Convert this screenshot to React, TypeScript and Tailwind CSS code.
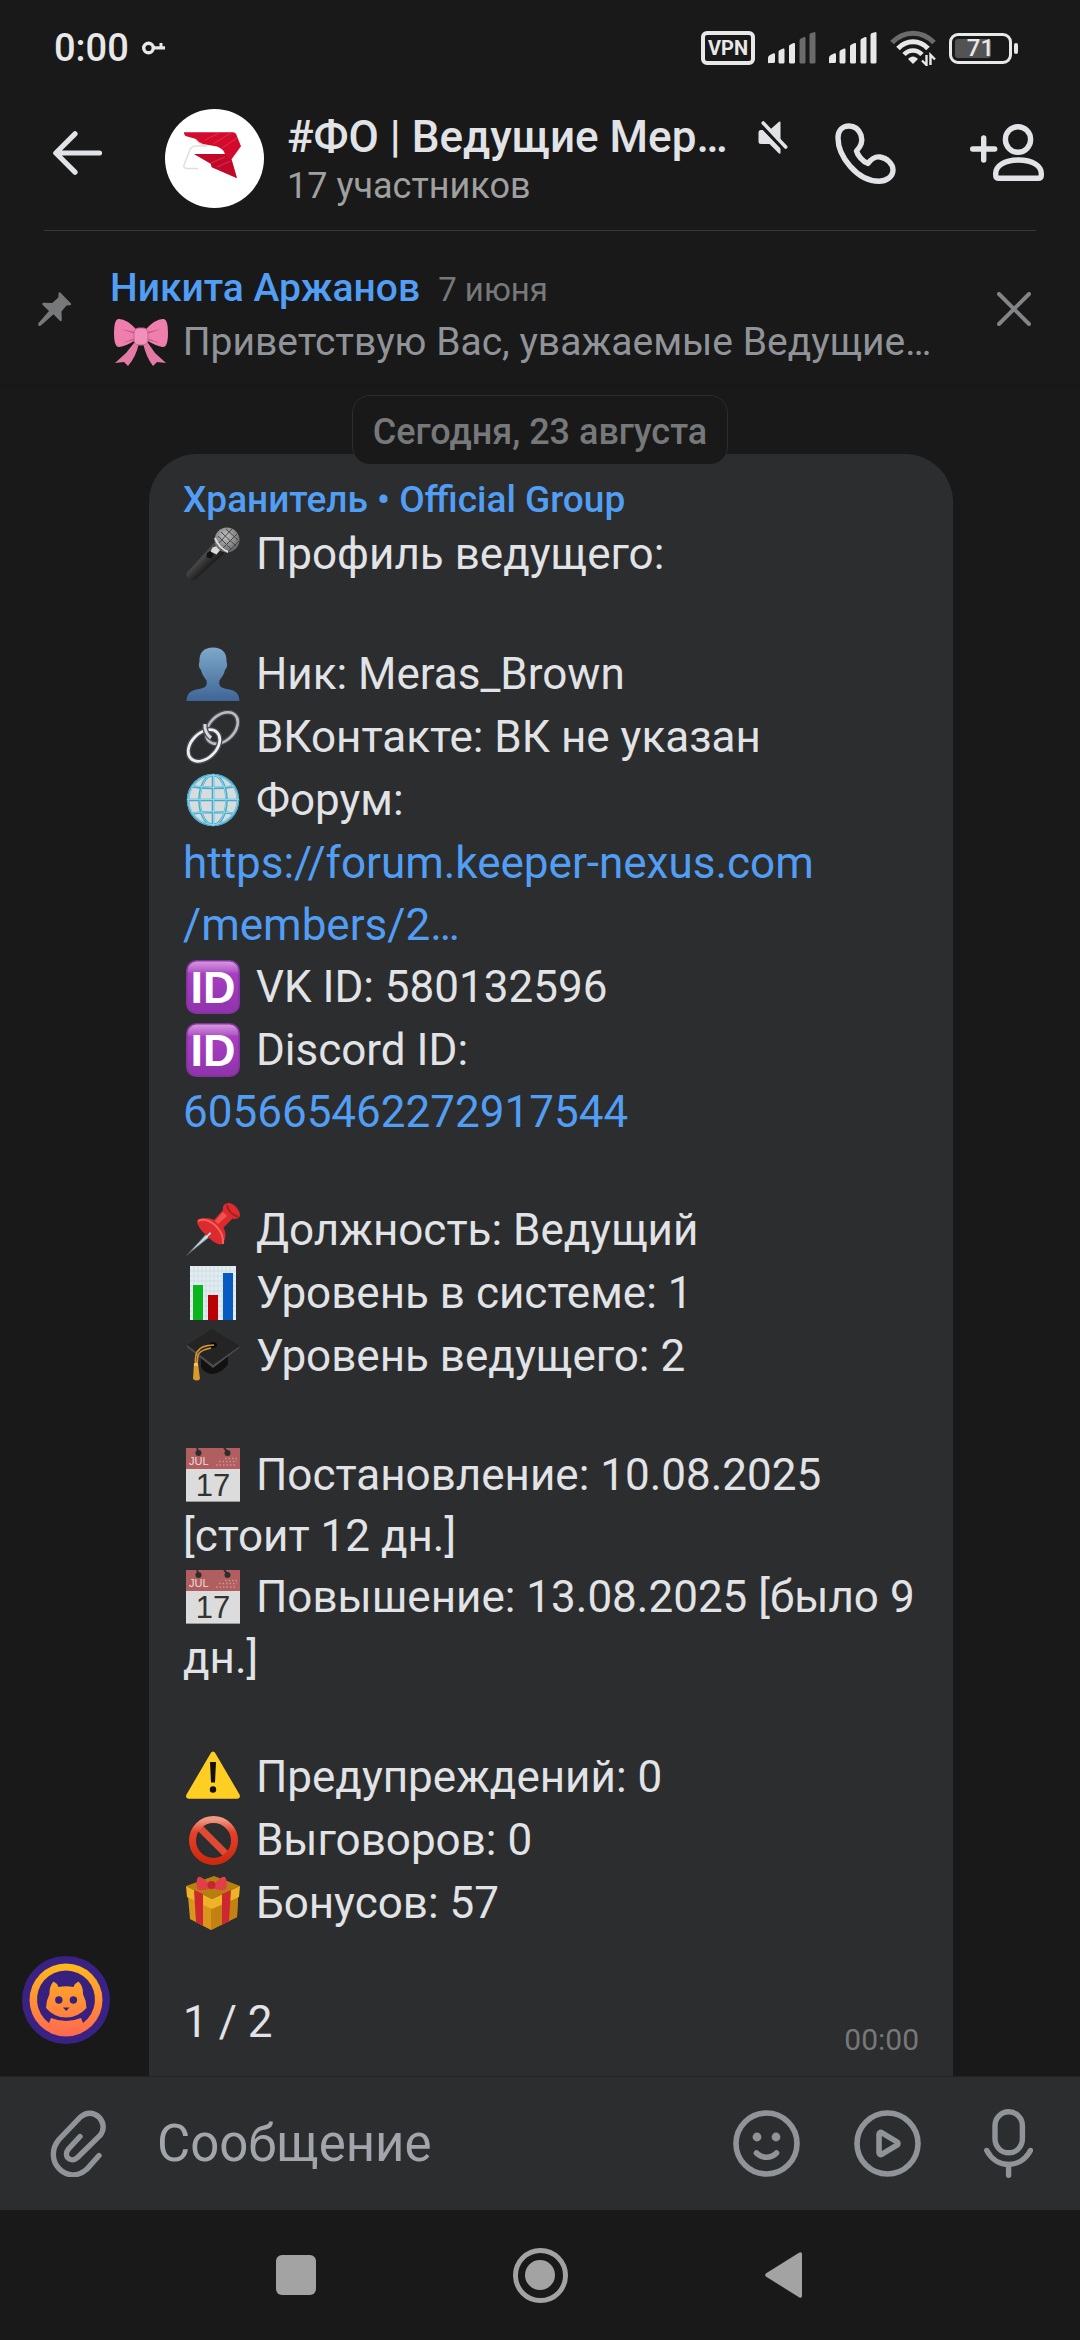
import React, { useState } from 'react';

interface IconProps {
  className?: string;
}

/* ---------- status bar ---------- */

const KeyIcon = () => (
  <svg width="23" height="14" viewBox="0 0 23 14" fill="none" aria-hidden="true">
    <circle cx="6.5" cy="7" r="4.8" stroke="#e8e8e8" strokeWidth="3.4" />
    <path d="M11 5.2h12v3.4H11zM17.500 2h3v4h-3z" fill="#e8e8e8" />
  </svg>
);

const bars = [
  'M0 31v-5q0-2 2-3l3-1.500q2-.6 2 1v7q0 1.500-1.500 1.500H1.500Q0 32 0 30z',
  'M10.500 30V20q0-1.500 1.500-2l3-1.500q1.500-.5 1.500 1V30q0 1.500-1.500 1.500h-3q-1.500 0-1.500-1.500z',
  'M21 30V14.500q0-1.500 1.500-2l3-1.500q1.500-.5 1.500 1v18q0 1.500-1.500 1.500h-3Q21 31.500 21 30z',
  'M31.500 30V8.500q0-1.500 1.500-2l3-1.500q1.500-.5 1.500 1v24q0 1.500-1.500 1.500h-3q-1.500 0-1.500-1.500z',
  'M41.500 30V3q0-1.500 1.500-2l3-.8q1.500-.5 1.500 1V30q0 1.500-1.500 1.500h-3q-1.500 0-1.500-1.500z',
];

const Signal = ({ level }: { level: number }) => (
  <svg width="48" height="32" viewBox="0 0 48 32" aria-hidden="true">
    {bars.map((d, i) => (
      <path key={d} d={d} fill={i < level ? '#e8e8e8' : '#6b6b6b'} />
    ))}
  </svg>
);

const Wifi = () => (
  <svg width="46" height="36" viewBox="0 0 46 36" fill="none" aria-hidden="true">
    <path d="M2 12.500C14 0 32 0 44 12.500" stroke="#6b6b6b" strokeWidth="5" />
    <path d="M8 18.500c8.500-9 21.500-9 30 0" stroke="#e8e8e8" strokeWidth="5" />
    <path d="M14 24.500c5-5.500 13-5.500 18 0" stroke="#e8e8e8" strokeWidth="4.500" />
    <path d="M18 29c3-3.500 7-3.500 10 0l-5 5z" fill="#e8e8e8" />
    <path d="M36.500 25v10l-4.500-4.500M40.500 35V25l4.500 4.500" stroke="#e8e8e8" strokeWidth="2.400" />
  </svg>
);

const Battery = ({ level }: { level: number }) => (
  <div className="flex items-center gap-0.5">
    <div className="relative flex h-[31px] w-[63px] items-center justify-center rounded-[9px] border-3 border-[#e8e8e8] text-[24px] leading-none font-medium text-[#e8e8e8]">
      <div className="absolute inset-y-[3px] left-[3px] rounded-[3px] bg-[#535353]" style={{ width: level / 2 }} />
      <span className="relative">{level}</span>
    </div>
    <div className="h-[11px] w-1 rounded-full bg-[#e8e8e8]" />
  </div>
);

const StatusBar = () => (
  <div className="flex h-24 items-center pr-[62px] pl-[54px] text-[#e8e8e8]">
    <span className="text-[38px] leading-none font-medium">0:00</span>
    <div className="ml-[13px]">
      <KeyIcon />
    </div>
    <div className="ml-auto flex items-center gap-[13px]">
      <span className="rounded-md border-4 border-[#e8e8e8] px-[3px] text-[20px] leading-[26px] font-bold">VPN</span>
      <Signal level={3} />
      <Signal level={5} />
      <Wifi />
      <Battery level={71} />
    </div>
  </div>
);

/* ---------- interface icons ---------- */

const BackIcon = () => (
  <svg width="49" height="44" viewBox="0 0 49 44" fill="none" stroke="#e1e3e6" strokeWidth="5.200" strokeLinecap="round" strokeLinejoin="round">
    <path d="M22 2.800L2.800 22 22 41.200M3 22h43.500" />
  </svg>
);

const MuteIcon = () => (
  <svg width="30" height="33" viewBox="0 0 30 33" fill="#e1e3e6" aria-label="Без звука">
    <path d="M12.500 8.200L21 .8q1.500-1 1.500 1v16.500z" />
    <path d="M3 9h2l17.500 18v4.500q0 2-1.500 1L11.500 23H3q-2.500 0-2.500-2.500V11.500Q.5 9 3 9z" />
    <path d="M2.500 4.500l22 23" stroke="#191919" strokeWidth="2.600" />
    <path d="M5.200 2l22.500 24" stroke="#e1e3e6" strokeWidth="3.600" strokeLinecap="round" />
  </svg>
);

const PhoneIcon = () => (
  <svg width="61" height="61" viewBox="0 0 61 61" fill="none" stroke="#e1e3e6" strokeWidth="5.400" strokeLinejoin="round">
    <path d="M14 3C20 3 24 7 26 12C28 19 26 23 21.500 28C22.500 32 28 39 33 40.500C37 35 41 33.500 45 34C52 35 58 41 58 47C58 54 51 58.200 44 58.200C22 58.200 3 33 3 15C3 7 8 3 14 3Z" />
  </svg>
);

const AddUserIcon = () => (
  <svg width="75" height="58" viewBox="0 0 75 58" fill="none" stroke="#e1e3e6" strokeWidth="5.400" strokeLinecap="round" strokeLinejoin="round">
    <path d="M2.700 25h22M13.700 14v22" />
    <ellipse cx="48" cy="15.500" rx="12.600" ry="12.800" />
    <path d="M48.500 36C34 36 25.700 42 25.700 49.500V51q0 3.300 3.300 3.300h39q3.300 0 3.300-3.300v-1.500C71.300 42 63 36 48.500 36Z" />
  </svg>
);

const PinIcon = () => (
  <svg width="34" height="34" viewBox="0 0 34 34" fill="#76787a" aria-hidden="true">
    <path d="M22.500.8L33 11.500q1 1.500-1 1.700l-3.500.3-5 6 .3 8q0 3-2.300 1l-6-6.200L3.500 33q-2.500 2-3.300 0-.5-1 .8-2.500L11 19l-6-5.700q-2-2.300.8-2.500l8.500.3 6-5.500.3-4q.4-2 1.900-.8z" />
  </svg>
);

const CloseIcon = () => (
  <svg width="34" height="34" viewBox="0 0 34 34" fill="none" stroke="#828486" strokeWidth="4" strokeLinecap="round">
    <path d="M2 2l30 30M32 2L2 32" />
  </svg>
);

const ClipIcon = () => (
  <svg width="57" height="67" viewBox="0 0 57 67" fill="none" stroke="#909499" strokeWidth="5.400" strokeLinecap="round">
    <path d="M30 26.500L18.500 39c-6 7.500 2.500 14.500 9 8.500L50 25.500C60 13 44-4.500 30.500 7L9 29.500C-8 50 17 77 37 59L49 45.500" />
  </svg>
);

const SmileIcon = () => (
  <svg width="67" height="67" viewBox="0 0 67 67" fill="none" stroke="#909499" strokeWidth="5.600" strokeLinecap="round">
    <circle cx="33.500" cy="33.500" r="30.500" />
    <circle cx="24" cy="27" r="4.400" fill="#909499" stroke="none" />
    <circle cx="43" cy="27" r="4.400" fill="#909499" stroke="none" />
    <path d="M23.500 43c5.500 5.600 14.500 5.600 20 0" />
  </svg>
);

const PlayIcon = () => (
  <svg width="67" height="67" viewBox="0 0 67 67" fill="none" stroke="#909499" strokeWidth="5.600" strokeLinejoin="round">
    <circle cx="33.500" cy="33.500" r="30.500" />
    <path d="M25 24.500v18q.2 3 3 1.700l15-9q2-1.700 0-3.400l-15-9q-2.800-1.300-3 1.700z" />
  </svg>
);

const MicIcon = () => (
  <svg width="49" height="69" viewBox="0 0 49 69" fill="none" stroke="#909499" strokeWidth="5.400" strokeLinecap="round">
    <rect x="11" y="2.800" width="27.400" height="41" rx="13.700" />
    <path d="M2.800 41.500c9.500 18.500 34 18.500 43.600 0M24.600 56v10.300" />
  </svg>
);

/* ---------- avatars ---------- */

const GroupAvatar = () => (
  <svg width="99" height="99" viewBox="0 0 99 99" className="shrink-0 rounded-full bg-white" role="img" aria-label="Фото беседы">
    <path d="M30 29q3 6 12 8H31q-5 0-6.500 5L19 56q-1 3 3 3.500h11" fill="none" stroke="#dedede" strokeWidth="1.500" />
    <path d="M19 23.300h49q2 0 3 1.500l5 12.500-9.500 13 5.500 19-25.300-11-1-3.500L29 45h31l-1.700-3.500Q56 39 52 37.500L38 35q-5-2-7-5l-10.500-3q-2-2-1.500-3.700z" fill="#d40b2e" />
    <path d="M29 45h31.500l3 4.500 3 1 5.500 18.500-25.300-11-1-3.500z" fill="#b00824" opacity=".5" />
    <path d="M40 31l14-7M48 35l18-11M57 39l15-10M46 54l14-6M52 58l14-6" stroke="#e5405a" opacity=".7" />
  </svg>
);

const BotAvatar = ({ className }: IconProps) => (
  <svg width="88" height="88" viewBox="0 0 88 88" className={className} role="img" aria-label="Хранитель">
    <defs>
      <linearGradient id="bot" gradientUnits="userSpaceOnUse" x1="0" y1="8" x2="0" y2="80">
        <stop offset="0" stopColor="#ffb91a" />
        <stop offset="1" stopColor="#ff6850" />
      </linearGradient>
    </defs>
    <circle cx="44" cy="44" r="44" fill="#3a2184" />
    <circle cx="44" cy="44" r="36.500" fill="url(#bot)" />
    <path d="M27 67a29 29 0 1 1 34 0l-2-5q-15 6-30 0z" fill="#38207e" />
    <path d="M31.500 25.500q3.500 1.500 5 5.500 7.500-1.500 15 0 1.500-4 5-5.500 5 5 4.500 12.500 3.500 7 3.500 14Q56 61.500 44 61.500T24 52q0-7 3.500-14-.5-7.500 4-12.500z" fill="url(#bot)" />
    <circle cx="36.800" cy="44" r="3.700" fill="#38207e" />
    <circle cx="51.400" cy="44" r="3.700" fill="#38207e" />
    <path d="M41 51.500h6.500L44.200 55z" fill="#38207e" />
  </svg>
);

/* ---------- emoji ---------- */

const Emoji = ({ label, children }: { label: string; children: React.ReactNode }) => (
  <svg width="54" height="54" viewBox="0 0 54 54" role="img" aria-label={label} className="mr-[5px] ml-[3px] inline-block align-[-12px]">
    {children}
  </svg>
);

const Bow = () => (
  <svg width="54" height="48" viewBox="0 0 54 48" role="img" aria-label="бант" className="mr-[5px] ml-1 inline-block align-[-11px]">
    <path d="M20 25l-8 10-11 10 9-1 4 4q8-9 11-23zM34 25l7 10 11 10-9-1-4 4q-7-9-10-23z" fill="#e27aa5" />
    <path d="M23 12Q12 0 4 1 0 2 0 15q0 14 5 14 5 0 17-7zM31 12Q42 0 50 1q4 1 4 14 0 14-5 14-5 0-17-7z" fill="#ee7fad" />
    <path d="M21 14L7 11l14 5zM21 20L8 25l13-3zM33 14l14-3-14 5zM33 20l13 5-13-3z" fill="#c9568a" />
    <rect x="20" y="10" width="14" height="17" rx="5" fill="#f190b8" stroke="#cc5f90" />
  </svg>
);

const Microphone = () => (
  <Emoji label="микрофон">
    <defs>
      <radialGradient id="mic" cx=".45" cy=".35" r=".7">
        <stop offset="0" stopColor="#c4c4c4" />
        <stop offset="1" stopColor="#5c5c5c" />
      </radialGradient>
      <linearGradient id="mic-body" x1="0" y1="0" x2="1" y2="1">
        <stop offset=".3" stopColor="#5d5d5d" />
        <stop offset=".6" stopColor="#1f1f1f" />
      </linearGradient>
    </defs>
    <path d="M28 16L.8 46q-1 3 1 5l3 2q3 .6 5-1L39 26z" fill="url(#mic-body)" />
    <path d="M26.500 20.500l4.500-1.500 3.500 3.500-4 5-6-3z" fill="#d9d9d9" />
    <path d="M21 26l3-2 4 3.500-2.500 4-5-1z" fill="#111" />
    <circle cx="41" cy="13" r="12.500" fill="url(#mic)" />
    <path d="M32 9l13 13M35 5l15 14M40 2l12 11M31 16l7 8M31 18L46 2M35 23L51 7M42 25l11-11" stroke="#474747" strokeWidth="1" />
    <path d="M29 11q4 10 13 14" fill="none" stroke="#ddd" strokeWidth="2" />
  </Emoji>
);

const Person = () => (
  <Emoji label="силуэт">
    <defs>
      <linearGradient id="person" x1="0" y1="0" x2="0" y2="1">
        <stop offset="0" stopColor="#7ea9c9" />
        <stop offset="1" stopColor="#3f6597" />
      </linearGradient>
    </defs>
    <path d="M27 .5c9 0 14 5 13.500 14 1.500 4 0 7-1.500 8.500-1 5-4 8-5.500 10.500-1.500 6 2.500 7.500 7 8.500 9 1 12.500 4 13 12H.5c.5-8 4-11 13-12 4.500-1 8.500-2.500 7-8.500C19 31 16 28 15 23c-1.500-1.500-3-4.500-1.500-8.500C13 5.500 18 .5 27 .5z" fill="url(#person)" />
  </Emoji>
);

const Chain = () => (
  <Emoji label="ссылка">
    <g fill="none">
      <ellipse cx="36" cy="18" rx="12.500" ry="18.500" transform="rotate(45 36 18)" stroke="#4a4a52" strokeWidth="5" />
      <ellipse cx="36" cy="18" rx="12.500" ry="18.500" transform="rotate(45 36 18)" stroke="#b9bcc4" strokeWidth="2.600" />
      <ellipse cx="18" cy="35.500" rx="12.500" ry="18.500" transform="rotate(45 18 35.500)" stroke="#4a4a52" strokeWidth="5.500" />
      <ellipse cx="18" cy="35.500" rx="12.500" ry="18.500" transform="rotate(45 18 35.500)" stroke="#eceef2" strokeWidth="2.800" />
      <path d="M19 14q-1 8 6 14" stroke="#4a4a52" strokeWidth="5.500" />
      <path d="M19 14q-1 8 6 14" stroke="#d7d9df" strokeWidth="3" />
    </g>
  </Emoji>
);

const Globe = () => (
  <Emoji label="глобус">
    <circle cx="27" cy="27" r="26" fill="#d9dcdd" />
    <g fill="none" stroke="#4aa9cb" strokeWidth="2.600">
      <circle cx="27" cy="27" r="25" />
      <ellipse cx="27" cy="27" rx="13.500" ry="25" />
      <path d="M27 1v52M1 27h52M6 13.500q21 3 42 0M6 40.500q21-3 42 0" />
    </g>
    <g fill="none" stroke="#8ad9ec" strokeWidth="1">
      <circle cx="27" cy="27" r="24.500" />
      <ellipse cx="27" cy="27" rx="13" ry="25" />
      <path d="M27.500 1v52M1 26.500h52M6 13q21 3 42 0M6 40q21-3 42 0" />
    </g>
  </Emoji>
);

const IdBadge = () => (
  <Emoji label="ID">
    <defs>
      <linearGradient id="id-bg" x1="0" y1="0" x2="0" y2="1">
        <stop offset="0" stopColor="#d99be0" />
        <stop offset=".2" stopColor="#b35ac8" />
        <stop offset=".24" stopColor="#a63fc0" />
        <stop offset="1" stopColor="#8f33ac" />
      </linearGradient>
    </defs>
    <rect x=".8" y=".8" width="52.400" height="52.400" rx="9.500" fill="url(#id-bg)" stroke="#83339e" strokeWidth="1.600" />
    <text x="27" y="43" textAnchor="middle" fontSize="45" className="font-['Liberation_Sans',sans-serif] font-bold" fill="#fff">
      ID
    </text>
  </Emoji>
);

const Pushpin = () => (
  <Emoji label="кнопка">
    <path d="M22 29L.5 52.500 26 32z" fill="#bcd0d6" stroke="#45565c" strokeWidth=".8" />
    <path d="M11 19q1-4 8-4 6 0 9 2l9-10q-1-6 5-7 5 0 9 5 4 5 2.500 9-3 3-7 1.500l-9 9q3 6 1.500 11-1.500 6-5 6-6-1-13-8.500Q12 25 11 19z" fill="#dc2b2e" />
    <path d="M12 18q8-4 18 5 8 8 7 18" fill="none" stroke="#f4625c" strokeWidth="2" />
    <path d="M29 18l8-9 4 4-9 8z" fill="#f2524f" />
    <path d="M41 2q1 8 11 12" fill="none" stroke="#a81a20" strokeWidth="2" />
    <path d="M24 29l-8 9 9-7z" fill="#dfe9ec" />
  </Emoji>
);

const BarChart = () => (
  <Emoji label="диаграмма">
    <rect x="4" width="46" height="54" fill="#e3edf1" />
    <path d="M8 0v54M12 0v54M16 0v54M20 0v54M24 0v54M28 0v54M32 0v54M36 0v54M40 0v54M44 0v54M4 5h46M4 10h46M4 15h46M4 20h46M4 25h46M4 30h46M4 35h46M4 40h46M4 45h46M4 50h46" stroke="#c5d8df" strokeWidth=".7" />
    <path d="M7 19h10v35H7z" fill="#08b51c" />
    <path d="M22 29h10v25H22z" fill="#b80206" />
    <path d="M37 7h10v47H37z" fill="#075bc0" />
  </Emoji>
);

const GradCap = () => (
  <Emoji label="выпускник">
    <path d="M15 24v14q4 7 12 7 10-2 15-10V22z" fill="#111" />
    <path d="M26 0l28 17-27 20L1 16z" fill="#242424" />
    <path d="M1 16l26 20 27-19-1 2-26 20L1 18z" fill="#4d4d4d" />
    <ellipse cx="27" cy="16" rx="4" ry="3" fill="#0b0b0b" />
    <path d="M28 16q-13 0-17 7-2 4-1.500 12M25 19q-11 2-13 7l-1 9" fill="none" stroke="#d9962a" strokeWidth="1.600" />
    <path d="M8 34h4l2 16q-3 3-7 0z" fill="#d99a2d" />
    <path d="M8 34h4v3H8z" fill="#f1c25e" />
  </Emoji>
);

const Calendar = () => (
  <Emoji label="календарь">
    <path d="M0 0h54v54H0z" fill="#dcdcdc" />
    <path d="M0 0h54v21H0z" fill="#b05e60" />
    <path d="M11 0l1.500 4M38 0l4 4" stroke="#2c2d2e" strokeWidth="1.800" />
    <circle cx="12.500" cy="5" r="3" fill="#2c2d2e" />
    <circle cx="41.500" cy="5" r="3" fill="#2c2d2e" />
    <path d="M30 17h21M33 13.500h18M39 10.500h12" stroke="#cf9192" strokeWidth="1.400" strokeDasharray="1.500 2" />
    <g className="font-['Liberation_Sans',sans-serif]">
      <text x="3" y="17" fontSize="11" fill="#f0dcdc">
        JUL
      </text>
      <text x="27" y="48" textAnchor="middle" fontSize="31" fill="#333">
        17
      </text>
    </g>
    <path d="M0 53.500h54" stroke="#999" />
  </Emoji>
);

const Warning = () => (
  <Emoji label="внимание">
    <path d="M27 1.500q1.500 0 2.500 2l24 41q1.500 4-2 4.200h-49q-3.500-.2-2-4.200l24-41q1-2 2.500-2z" fill="#ffce22" />
    <path d="M24 12h6l-1 20.500h-4z" fill="#111" />
    <circle cx="27" cy="39.500" r="3.200" fill="#111" />
  </Emoji>
);

const Prohibited = () => (
  <Emoji label="запрещено">
    <defs>
      <linearGradient id="ban" x1="0" y1="0" x2="0" y2="1">
        <stop offset="0" stopColor="#f09a84" />
        <stop offset=".3" stopColor="#e5402a" />
        <stop offset="1" stopColor="#cf2a10" />
      </linearGradient>
    </defs>
    <path d="M12 13l30 30" stroke="#e04a35" strokeWidth="7" />
    <circle cx="27.500" cy="27.500" r="21" fill="none" stroke="url(#ban)" strokeWidth="7" />
  </Emoji>
);

const Gift = () => (
  <Emoji label="подарок">
    <path d="M2 20l23 12v22L4 43zM52 20L25 32v22l26-13z" fill="#d8971b" />
    <path d="M25 32v22l26-13 1-21z" fill="#c38013" />
    <path d="M0 10L28 0l26 10-28 13z" fill="#b97e10" />
    <path d="M0 10l26 13v10L1 21zM54 10L26 23v10l27-12z" fill="#eeb326" />
    <path d="M8 14l9 4v32l-7-4zM45 14l-9 4v31l7-4z" fill="#cf2730" />
    <path d="M24 9Q15-1 12 1q-2 3-1 12 4 3 14-1zM27 9q9-10 12-8 3 3 1 12-4 3-14-1z" fill="#e03f48" />
    <circle cx="25.500" cy="9" r="4" fill="#c42631" />
  </Emoji>
);

/* ---------- sections ---------- */

const ChatHeader = () => (
  <header className="flex items-start pt-[13px] pr-[35px] pb-[21px] pl-[53px]">
    <button aria-label="Назад" className="flex h-[88px] shrink-0 items-center">
      <BackIcon />
    </button>
    <div className="ml-[63px] shrink-0">
      <GroupAvatar />
    </div>
    <div className="ml-[23px] min-w-0 flex-1 pt-0.5">
      <div className="flex items-center justify-between">
        <h1 className="truncate text-[44px] leading-[52px] font-medium">#ФО | Ведущие Мер…</h1>
        <MuteIcon />
      </div>
      <p className="text-[36px] leading-[46px] text-[#a0a0a0]">17 участников</p>
    </div>
    <button aria-label="Позвонить" className="ml-[47px] flex h-[88px] shrink-0 items-center">
      <PhoneIcon />
    </button>
    <button aria-label="Добавить участника" className="ml-[74px] flex h-[88px] shrink-0 items-center">
      <AddUserIcon />
    </button>
  </header>
);

const PinnedMessage = ({ onClose }: { onClose: () => void }) => (
  <section className="flex items-center border-b border-[#161616] pt-4 pr-[49px] pb-3.5 pl-[38px]">
    <PinIcon />
    <div className="ml-[38px] min-w-0 flex-1 pt-[15px]">
      <div className="flex items-baseline gap-[18px]">
        <span className="text-[39px] leading-[52px] font-medium text-[#529ef4]">Никита Аржанов</span>
        <span className="text-[33px] leading-none text-[#76787a]">7 июня</span>
      </div>
      <p className="truncate text-[39px] leading-[56px] text-[#909499]">
        <Bow /> Приветствую Вас, уважаемые Ведущие…
      </p>
    </div>
    <button aria-label="Закрыть" onClick={onClose}>
      <CloseIcon />
    </button>
  </section>
);

const Message = () => (
  <article className="flex flex-1 items-end pr-[127px] pl-[22px]">
    <BotAvatar className="mr-[39px] mb-8 shrink-0" />
    <div className="flex-1 self-stretch rounded-t-[48px] bg-[#2c2d2e] px-[34px] pt-[22px] pb-[15px] text-[44px] leading-[63px]">
      <h2 className="text-[37px] leading-[47px] font-medium text-[#529ef4]">Хранитель • Official Group</h2>
      <div className="flex flex-col gap-[57px]">
        <p>
          <Microphone /> Профиль ведущего:
        </p>
        <div>
          <p>
            <Person /> Ник: Meras_Brown
          </p>
          <p>
            <Chain /> ВКонтакте: ВК не указан
          </p>
          <p>
            <Globe /> Форум:
          </p>
          <a href="#forum" className="block leading-[62px] text-[#529ef4]">
            https://forum.keeper-nexus.com
            <br />
            /members/2…
          </a>
          <p>
            <IdBadge /> VK ID: 580132596
          </p>
          <p>
            <IdBadge /> Discord ID:
          </p>
          <a href="#discord" className="block leading-[60px] text-[#529ef4]">
            605665462272917544
          </a>
        </div>
        <div>
          <p>
            <Pushpin /> Должность: Ведущий
          </p>
          <p>
            <BarChart /> Уровень в системе: 1
          </p>
          <p>
            <GradCap /> Уровень ведущего: 2
          </p>
        </div>
        <div className="leading-[61px]">
          <p>
            <Calendar /> Постановление: 10.08.2025 [стоит 12 дн.]
          </p>
          <p>
            <Calendar /> Повышение: 13.08.2025 [было 9 дн.]
          </p>
        </div>
        <div>
          <p>
            <Warning /> Предупреждений: 0
          </p>
          <p>
            <Prohibited /> Выговоров: 0
          </p>
          <p>
            <Gift /> Бонусов: 57
          </p>
        </div>
        <div className="flex justify-between leading-[60px]">
          <p>1 / 2</p>
          <time className="pt-7 text-[30px] leading-10 text-[#76787a]">00:00</time>
        </div>
      </div>
    </div>
  </article>
);

const Composer = () => {
  const [text, setText] = useState('');

  return (
    <form
      onSubmit={(e) => e.preventDefault()}
      className="flex h-[134px] items-center border-t border-[#232425] bg-[#2c2d2e] pr-[47px] pl-[50px]"
    >
      <button type="button" aria-label="Прикрепить">
        <ClipIcon />
      </button>
      <input
        type="text"
        value={text}
        onChange={(e) => setText(e.target.value)}
        placeholder="Сообщение"
        aria-label="Сообщение"
        className="mx-[50px] min-w-0 flex-1 bg-transparent text-[51px] leading-[64px] outline-none placeholder:text-[#a2a5ab]"
      />
      <button type="button" aria-label="Смайлы">
        <SmileIcon />
      </button>
      <button type="button" aria-label="Видеосообщение" className="ml-[54px]">
        <PlayIcon />
      </button>
      <button type="button" aria-label="Голосовое сообщение" className="ml-[63px]">
        <MicIcon />
      </button>
    </form>
  );
};

const SystemNav = () => (
  <nav className="flex h-[130px] items-center justify-center gap-[197px]">
    <button aria-label="Недавние" className="size-10 rounded-md bg-[#a3a3a3]" />
    <button aria-label="Домой" className="flex size-[55px] items-center justify-center rounded-full border-5 border-[#a3a3a3]">
      <span className="size-[30px] rounded-full bg-[#a3a3a3]" />
    </button>
    <button aria-label="Назад в системе">
      <svg width="40" height="46" viewBox="0 0 40 46" fill="#a3a3a3">
        <path d="M.8 21.500L34 .8q3-1.500 3 1.500v41.400q0 3-3 1.500L.8 24.500q-1.200-1.500 0-3z" />
      </svg>
    </button>
  </nav>
);

export default function App() {
  const [pinned, setPinned] = useState(true);

  return (
    <div className="flex min-h-screen flex-col bg-[#191919] font-['Roboto',sans-serif] text-[#e1e3e6]">
      <StatusBar />
      <ChatHeader />
      <div className="mx-11 h-px bg-[#363738]" />
      {pinned && <PinnedMessage onClose={() => setPinned(false)} />}
      <main className="flex flex-1 flex-col pt-2.5">
        <div className="relative z-10 -mb-[11px] self-center rounded-[18px] border border-[#2c2d2e] bg-[#191919] px-5 pt-1 text-[36px] leading-[64px] font-medium text-[#76787a]">
          Сегодня, 23 августа
        </div>
        <Message />
      </main>
      <Composer />
      <SystemNav />
    </div>
  );
}
